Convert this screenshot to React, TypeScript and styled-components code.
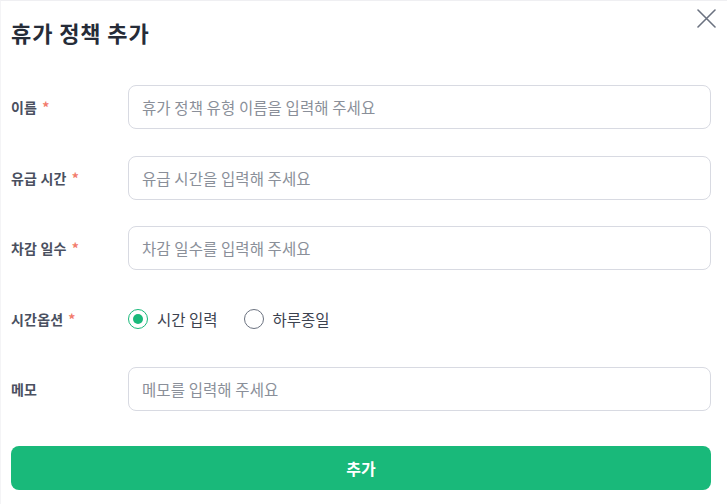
import React, { useState } from 'react';
import styled, { createGlobalStyle } from 'styled-components';

const GlobalStyle = createGlobalStyle`
	html, body {
		margin: 0;
		padding: 0;
		background: #ffffff;
	}
	body {
		font-family: 'Noto Sans CJK KR', 'Noto Sans', sans-serif;
	}
	* {
		box-sizing: border-box;
	}
`;

const fields = [
	{ label: '이름', required: true, placeholder: '휴가 정책 유형 이름을 입력해 주세요' },
	{ label: '유급 시간', required: true, placeholder: '유급 시간을 입력해 주세요' },
	{ label: '차감 일수', required: true, placeholder: '차감 일수를 입력해 주세요' },
];

const App = () => {
	const [option, setOption] = useState('time');

	return (
		<>
			<GlobalStyle />
			<Modal>
				<Header>
					<Title>휴가 정책 추가</Title>
					<CloseButton aria-label="닫기">
						<svg width="19" height="19" viewBox="0 0 19 19" fill="none">
							<path d="M1 1L18 18M18 1L1 18" stroke="#6b7280" strokeWidth="1.6" strokeLinecap="round" />
						</svg>
					</CloseButton>
				</Header>
				<Form onSubmit={(e) => e.preventDefault()}>
					{fields.map((f) => (
						<Row key={f.label}>
							<Label>
								{f.label}
								{f.required && <Star>*</Star>}
							</Label>
							<TextInput placeholder={f.placeholder} />
						</Row>
					))}
					<Row>
						<Label>
							시간옵션<Star>*</Star>
						</Label>
						<RadioGroup>
							<RadioItem onClick={() => setOption('time')}>
								<RadioCircle $checked={option === 'time'} />
								시간 입력
							</RadioItem>
							<RadioItem onClick={() => setOption('day')}>
								<RadioCircle $checked={option === 'day'} />
								하루종일
							</RadioItem>
						</RadioGroup>
					</Row>
					<Row>
						<Label>메모</Label>
						<TextInput placeholder="메모를 입력해 주세요" />
					</Row>
					<SubmitButton type="submit">추가</SubmitButton>
				</Form>
			</Modal>
		</>
	);
};

const Modal = styled.div`
	width: 727px;
	height: 504px;
	background: #fff;
	border-top: 1px solid #efeff2;
	border-left: 1px solid #f4f4f6;
	padding: 0 16px 0 10px;
	position: relative;
`;
const Header = styled.div`
	display: flex;
	align-items: center;
	height: 63px;
	padding-bottom: 2px;
`;
const Title = styled.h2`
	margin: 0;
	font-size: 22px;
	font-weight: 700;
	color: #262c38;
	letter-spacing: 0.9px;
`;
const CloseButton = styled.button`
	position: absolute;
	top: 8px;
	right: 11px;
	border: none;
	background: none;
	padding: 0;
	width: 19px;
	height: 19px;
	cursor: pointer;
	display: flex;
`;
const Form = styled.form`
	display: flex;
	flex-direction: column;
	gap: 26.5px;
	padding-top: 21px;
`;
const Row = styled.div`
	display: flex;
	align-items: center;
	height: 44px;
`;
const Label = styled.label`
	width: 117px;
	flex-shrink: 0;
	font-size: 14px;
	font-weight: 700;
	color: #4a5060;
	letter-spacing: 0.2px;
`;
const Star = styled.span`
	color: #f27b6c;
	margin-left: 5px;
`;
const TextInput = styled.input`
	flex: 1;
	height: 44px;
	border: 1px solid #d8dae2;
	border-radius: 8px;
	padding: 0 13px;
	font-family: inherit;
	font-size: 15.5px;
	letter-spacing: 0.1px;
	color: #262c38;
	outline: none;
	&::placeholder {
		color: #8a8f99;
	}
`;
const RadioGroup = styled.div`
	display: flex;
	align-items: center;
	gap: 26px;
`;
const RadioItem = styled.div`
	display: flex;
	align-items: center;
	gap: 9px;
	font-size: 15.5px;
	color: #3d4350;
	cursor: pointer;
`;
const RadioCircle = styled.span<{ $checked: boolean }>`
	width: 20px;
	height: 20px;
	border-radius: 50%;
	border: 1.5px solid ${(p) => (p.$checked ? '#19b97a' : '#6b7280')};
	display: flex;
	align-items: center;
	justify-content: center;
	&::after {
		content: '';
		width: 10px;
		height: 10px;
		border-radius: 50%;
		background: ${(p) => (p.$checked ? '#19b97a' : 'transparent')};
	}
`;
const SubmitButton = styled.button`
	margin-top: 8px;
	height: 44px;
	border: none;
	border-radius: 8px;
	background: #19b97a;
	color: #fff;
	font-family: inherit;
	font-size: 16px;
	font-weight: 700;
	cursor: pointer;
`;

export default App;
